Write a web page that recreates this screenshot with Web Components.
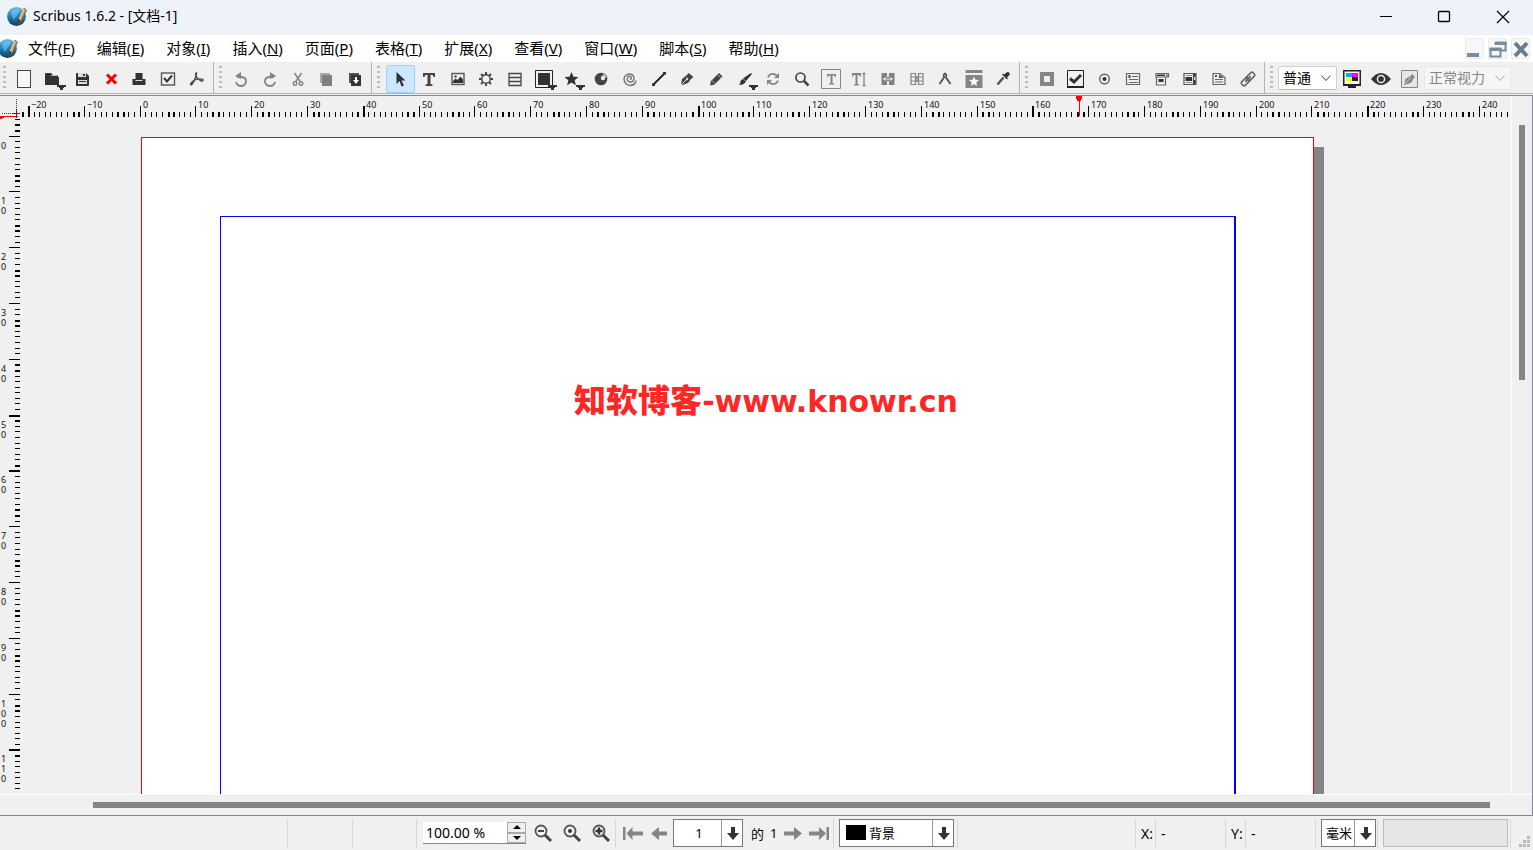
<!DOCTYPE html>
<html lang="zh-CN">
<head>
<meta charset="utf-8">
<title>Scribus 1.6.2 - [文档-1]</title>
<style>
html,body{height:100%;margin:0}
body{font-family:"Noto Sans","Noto Sans CJK SC",sans-serif;font-size:14px;color:#000;background:#f0f0f0;overflow:hidden}
</style>
</head>
<body>
<scribus-window></scribus-window>
<script>
const DOWN='<path d="M18 20h9v2h-2v1h-1v2h-3v-2h-1v-1h-2z" fill="#333"/>';
const ZOOM='<circle cx="12" cy="12" r="5.500" fill="none" stroke="#555" stroke-width="1.800"/><path d="M16 16l6 6" stroke="#444" stroke-width="3"/>';
const ICONS={
new:'<rect x="7.500" y="5.500" width="13" height="17" fill="#f7f7f7" stroke="#444"/>',
open:'<path d="M6 9q0-1 1-1h5l2 2h5v2h1v8H6z" fill="#333"/><path d="M12 10.500h6.500" stroke="#bbb"/>'+DOWN,
save:'<path d="M8 9q0-1 1-1h9l3 3v9q0 1-1 1H8z" fill="#333"/><path d="M10 8h8v4h-8zM10 15h9v4h-9z" fill="#ddd"/><path d="M15 9h2v2h-2zM11 16h7v1h-7z" fill="#333"/>',
close:'<path d="M10 9.500l9 9M19 9.500l-9 9" stroke="#f00" stroke-width="3"/>',
print:'<path d="M10.500 8h7v6h3v6h-13v-6h3z" fill="#333"/><path d="M10.500 15.500h7" stroke="#ddd"/>',
verify:'<rect x="7.500" y="8" width="13" height="12" fill="none" stroke="#555" stroke-width="1.400"/><path d="M10 13l3 3.500 5-6" fill="none" stroke="#333" stroke-width="2"/>',
pdf:'<path d="M13.500 8q-1.500 0-.5 3 1 3 5 5 2.500 0 2-1.500-3-1.500-8 .5-4 2-4.500 4.500 1 1 2.500-1.500 2-3 3.500-9z" fill="none" stroke="#444" stroke-width="1.300"/>',
undo:'<path d="M10 12h5q4.500 1 4 5-1 4-5 4-4 0-5-4" fill="none" stroke="#858585" stroke-width="1.800"/><path d="M14 7v7l-6-3z" fill="#858585"/>',
redo:'<path d="M18 12h-5q-4.500 1-4 5 1 4 5 4 4 0 5-4" fill="none" stroke="#858585" stroke-width="1.800"/><path d="M14 7v7l6-3z" fill="#858585"/>',
cut:'<path d="M10.500 8l6 9M17.500 8l-6 9" stroke="#858585" stroke-width="1.500"/><circle cx="11" cy="18.500" r="1.800" fill="none" stroke="#858585" stroke-width="1.400"/><circle cx="17" cy="18.500" r="1.800" fill="none" stroke="#858585" stroke-width="1.400"/>',
copy:'<path d="M8 8h10v2h-8v8H8z" fill="#aaa"/><path d="M10 10h10v11H10z" fill="#808080"/>',
paste:'<path d="M8 8h10v2h-8v8H8z" fill="#555"/><path d="M10 10h10v11H10z" fill="#333"/><path d="M14 12h2v3h2l-3 4-3-4h2z" fill="#fff"/>',
select:'<path d="M10.500 7v12l3-3 2 5.500 2.500-1-2.500-5h4z" fill="#333"/>',
text:'<path d="M8 8h12v4h-1.500l-.8-2H15.500v9l2 .5V21h-7v-1.500l2-.5v-9h-2.200l-.8 2H8z" fill="#444"/>',
image:'<rect x="8" y="8.500" width="12" height="11" fill="none" stroke="#555" stroke-width="1.400"/><path d="M9 18v-2l2.500-2.500 2 1.500 3-3.500 2.500 3v3.500z" fill="#333"/><circle cx="11.500" cy="11.500" r="1.300" fill="#555"/>',
render:'<circle cx="14" cy="14" r="4.200" fill="none" stroke="#444" stroke-width="1.400"/><g stroke="#444" stroke-width="2"><path d="M14 7v2.500M14 18.500V21M7 14h2.500M18.500 14H21M9 9l1.800 1.800M17.200 17.200L19 19M19 9l-1.800 1.800M10.800 17.200L9 19"/></g>',
table:'<path d="M8 8.500h12v12H8zM8 12.500h12M8 16.500h12" fill="none" stroke="#444" stroke-width="1.300"/>',
shape:'<path d="M5.500 5.500h17v17h-17z" fill="none" stroke="#222"/><path d="M8 8h12v12H8z" fill="#333"/>'+DOWN,
polygon:'<path d="M13.500 7l2 4.700 5 .3-3.800 3.300 1.200 5-4.400-2.700-4.400 2.700 1.200-5L6.500 12l5-.3z" fill="#333"/>'+DOWN,
arc:'<circle cx="14" cy="14" r="6.300" fill="#444"/><path d="M14 14l3-6.500 4 4.500z" fill="#aaa"/><circle cx="16" cy="13" r="2.200" fill="#eee"/>',
spiral:'<path d="M14 14.500q2-1 1-2.500-2-1.500-3.500.5-1 3.500 2 4.500 4 .5 4.500-3.500 0-4-4.500-4.500-5 .5-5.500 5 .5 5.500 6 6.500 5 0 6-5" fill="none" stroke="#777" stroke-width="1.500"/>',
line:'<path d="M8 20L20 8" stroke="#222" stroke-width="2"/><path d="M7 18.500h3v2.500H7zM18 7h3v2.500h-3z" fill="#333"/>',
bezier:'<path d="M8 20l1-6 5-4 1.500-2 5 4-2.500 2-3 4-5.500 2z" fill="#444"/><path d="M8 20l6-6" stroke="#ddd"/><circle cx="14" cy="14" r="1.200" fill="#ddd"/>',
pencil:'<path d="M8 20.500l1-4.500 8-8 3.500 3.500-8 8z" fill="#444"/><path d="M15.500 9.500l3.500 3.500M10 15.500l3 3" stroke="#aaa"/>',
brush:'<path d="M20 8l1 1-6 7-3-2.500z" fill="#333"/><path d="M12 14l3 2.500q-2 3.500-7.500 3.500 2-1 2-3.500 0-2 2.500-2.500z" fill="#333"/>'+DOWN,
rotate:'<path d="M9 12.500q1.500-4 5.500-3.500 2.500.5 3.500 2M19 15.500q-1.500 4-5.500 3.500-2.500-.5-3.500-2" fill="none" stroke="#858585" stroke-width="1.800"/><path d="M20 8v5h-5zM8 20v-5h5z" fill="#858585"/>',
zoom:'<circle cx="12.500" cy="12.500" r="4.500" fill="none" stroke="#444" stroke-width="1.700"/><path d="M16 16l4.500 4.500" stroke="#444" stroke-width="2.500"/>',
content:'<path d="M4.500 4.500h19v19h-19z" fill="none" stroke="#858585"/><path d="M10 9h9v3h-1l-.8-1.500H15.500V18l1.500.5v1h-5v-1l1.500-.5v-7.500h-1.700L11 12h-1z" fill="#858585"/>',
story:'<path d="M7 8h9v3.500h-1l-.8-1.500H12.500v9l1.500.5v1H9v-1l1.500-.5v-9H8.800L8 11.500H7z" fill="#858585"/><path d="M17.500 8.500h3M19 9v11M17.500 20.500h3" stroke="#858585" stroke-width="1.300"/>',
link:'<path d="M7.500 8H13v4h2V8h5.500v12H15v-4h-2v4H7.500z" fill="#808080"/><path d="M9.500 14H18M12 12.500L9.500 14l2.500 1.500M16 12.500l2.500 1.500-2.500 1.500" fill="none" stroke="#eee"/>',
unlink:'<path d="M8 8.500h4.500v11H8zM15.500 8.500H20v11h-4.500zM8 12h12M8 16h12M14 11v6" fill="none" stroke="#858585" stroke-width="1.200"/>',
measure:'<circle cx="14" cy="10.500" r="1.500" fill="none" stroke="#444" stroke-width="1.500"/><path d="M13 12.500l-4.500 6.500M15 12.500l4.500 6.500" stroke="#555" stroke-width="2"/><path d="M14 7.500v2" stroke="#444"/>',
copyprops:'<path d="M5.500 5h17v3h-17zM5.500 10h17v13h-17z" fill="#858585"/><path d="M14 11.500l1.300 3.300 3.700.2-2.800 2.500.9 3.500-3.100-1.900-3.100 1.900.9-3.500L9 15l3.700-.2z" fill="#fff"/>',
eyedrop:'<path d="M17 8q2-2 3.500 0 1 1.500-1 3l-1.500 1.500 1 1-1 1-5-5 1-1 1 1z" fill="#333"/><path d="M14.500 12.500l-6 7" stroke="#555" stroke-width="2.500"/>',
pushbtn:'<path d="M8.500 8.500h11v11h-11z" fill="none" stroke="#858585" stroke-width="3"/><path d="M10.500 10.500h7v7h-7z" fill="none" stroke="#666" stroke-width=".8"/>',
checkbox:'<path d="M5.500 5.500h16v17h-16z" fill="none" stroke="#222"/><path d="M5 22h17" stroke="#222" stroke-width="2"/><path d="M8 13.500l4 3.500 7-7" fill="none" stroke="#333" stroke-width="3"/>',
radio:'<circle cx="13.500" cy="14" r="4.800" fill="none" stroke="#666" stroke-width="1.400"/><circle cx="13.500" cy="14" r="2" fill="#333"/>',
field:'<path d="M7.500 8.500h13v11h-13zM13 11.500h6M10 14.500h9M10 17.500h9" fill="none" stroke="#666" stroke-width="1.200"/><path d="M9.500 10h2v3h-2z" fill="#444"/>',
combo:'<path d="M8 8.500h12.500V12H8zM8.500 12v8h9v-8" fill="none" stroke="#666" stroke-width="1.200"/><path d="M9 9.500h8V11H9zM10.500 14h5v3h-5z" fill="#333"/><path d="M18 9.500h2v2h-2z" fill="#777"/>',
list:'<path d="M8 8.500h12v11H8zM17.500 9v10" fill="none" stroke="#555" stroke-width="1.200"/><path d="M9.500 12h6.500v4H9.500zM17.500 9h2v3h-2zM17.500 15h2v4h-2z" fill="#333"/><path d="M10 10.500h6M10 17.500h6" stroke="#888"/>',
note:'<path d="M8 8.500h7l5 4v7H8z" fill="none" stroke="#666" stroke-width="1.200"/><path d="M10 14.500h8M10 17h8" stroke="#666"/><path d="M10 10h2v2h-2zM14 9l5 4h-5z" fill="#555"/>',
hyper:'<g transform="rotate(-45 14 14)" fill="none" stroke="#666" stroke-width="1.600"><rect x="6" y="11.500" width="9" height="5" rx="1.500"/><rect x="13" y="11.500" width="9" height="5" rx="1.500"/><path d="M10 14h8"/></g>',
display:'<path d="M5 5h18v16H5z" fill="#222"/><path d="M6.500 6.500h15v12.500h-15z" fill="#f4f4f4"/><path d="M8 8h6v4H8z" fill="#0af"/><path d="M14 8h6v4h-6z" fill="#f0f"/><path d="M8 12h6v4H8z" fill="#ff0"/><path d="M14 12h6v4h-6zM10 20h8v3h-8z" fill="#222"/>',
eye:'<path d="M4 14q10-12 20 0-10 12-20 0z" fill="#333"/><circle cx="14" cy="14" r="3.600" fill="none" stroke="#eee" stroke-width="1.500"/>',
editprev:'<path d="M5.500 5.500h16v17h-16z" fill="#e6e6e6" stroke="#858585"/><path d="M8 20l1.500-6 5-3 1.500-2 3 3-2 2-1 3-4 2z" fill="#858585"/><path d="M9 19l6-7" stroke="#ccc"/>',
zoomout:ZOOM+'<path d="M9 12h6" stroke="#444" stroke-width="2"/>',
zoom100:ZOOM+'<circle cx="12" cy="12" r="2" fill="#333"/>',
zoomin:ZOOM+'<path d="M8.500 12h7M12 8.500v7" stroke="#333" stroke-width="2.400"/>',
first:'<path d="M5 8h2.500v13H5zM8.500 14.500l6-6.500v4.500H25v4h-10.500v4.500z" fill="#858585"/>',
prev:'<path d="M6 14.500l8-6.500v4.500h8v4h-8v4.500z" fill="#858585"/>',
next:'<path d="M23 14.500l-8-6.500v4.500H5v4h10v4.500z" fill="#858585"/>',
last:'<path d="M20.500 8H23v13h-2.500zM20 14.500l-7-6.500v4.500H3v4h10v4.500z" fill="#858585"/>',
arrowdown:'<path d="M12 7h4v6h4l-6 7-6-7h4z" fill="#333"/>',
chevron:'<path d="M9.500 11.500l4.500 5 4.500-5" fill="none" stroke="currentColor"/>',
logo:'<defs><linearGradient id="b" x1="0" y1="0" x2="0" y2="1"><stop offset="0" stop-color="#66bdf0"/><stop offset=".5" stop-color="#1d80b9"/><stop offset="1" stop-color="#123c5c"/></linearGradient></defs><circle cx="13.500" cy="13.500" r="9.400" fill="url(#b)"/><path d="M8 8q5-3 9-1l-6 10q-3-4-3-9z" fill="#91d0f2" opacity=".5"/><path d="M21 5l2.500 2-4.500 10-4 4.500 1-6.500z" fill="#c0935a" stroke="#5a4228" stroke-width=".6"/><path d="M21 6l-4.500 10" stroke="#f2d493" stroke-width="1.500"/><path d="M16 16l-1.500 5 3-3z" fill="#402b18"/>',
winmin:'<path d="M7 14.500h12" stroke="#000"/>',
winmax:'<rect x="7.500" y="9.500" width="11" height="10" rx="1" fill="none" stroke="#000" stroke-width="1.300"/>',
winclose:'<path d="M8 9l12 12M20 9L8 21" stroke="#000" stroke-width="1.200"/>',
mdimin:'<path d="M6 18h12v4H6z" fill="#758ba0"/>',
mdimax:'<path d="M11.500 7.500h10v8h-4M6.500 13.500h10v8h-10z" fill="none" stroke="#758ba0" stroke-width="2"/><path d="M10.500 7h12v3h-12zM5.500 13h12v3h-12z" fill="#758ba0"/>',
mdiclose:'<path d="M8 8l12 13M20 8L8 21" stroke="#667d91" stroke-width="4"/>'
};
function define(name,css,html,setup){
  customElements.define(name,class extends HTMLElement{
    constructor(){super();this.attachShadow({mode:'open'})}
    connectedCallback(){
      this.shadowRoot.innerHTML='<style>*{box-sizing:border-box}'+css+'</style>'+(typeof html==='function'?html(this):html);
      if(setup)setup(this);
    }
  });
}
define('s-icon',':host{display:block;width:28px;height:28px;flex:none}svg{display:block;overflow:visible;flex:none}',
  el=>`<svg width="28" height="28" viewBox="0 0 28 28" aria-hidden="true">${ICONS[el.getAttribute('name')]}</svg>`);

define('tool-button',`:host{display:block;flex:1;min-width:0}
button{width:100%;height:28px;padding:0;border:1px solid transparent;border-radius:2px;background:none;display:grid;place-content:center;overflow:visible}
:host([active]) button{background:#cce8ff;border-color:#99d1ff}`,
  el=>`<button aria-label="${el.getAttribute('label')}"><s-icon name="${el.getAttribute('icon')}"></s-icon></button>`);

define('tool-bar',`:host{display:flex;flex:none;height:32px;padding:3px 2px 0 0;border-right:1px solid #b4b4b4;border-bottom:1px solid #b4b4b4}
i{flex:none;width:3px;height:24px;margin:1px 5px 0 5px;background:repeating-linear-gradient(#bbb 0 2px,transparent 2px 5px)}
:host([lead]) i{margin:1px 4px 0 3px}:host([wide]) i{margin-right:6px}:host([last]){flex:1;border-right:0}`,'<i></i><slot></slot>');

define('combo-box',`:host{display:grid;grid-template-rows:24px;flex:none;height:24px;font-size:14px}
select,s-icon{grid-area:1/1}
select{appearance:none;width:100%;height:100%;margin:0;padding:0 20px 2px 4px;border:1px solid #d0d0d0;border-bottom-color:#bbb;border-radius:2px;background:#fff;color:#000;opacity:1;font:inherit}
select:disabled{color:#858585;background:#f6f6f6;border-color:#e8e8e8}
s-icon{justify-self:end;align-self:center;pointer-events:none;margin-right:-3px;color:#444}
:host([disabled]) s-icon{color:#aaa}
:host([classic]){height:28px;grid-template-rows:28px}
:host([classic]) select{border:1px solid #777;border-radius:0;padding:0 22px 0 4px}
:host([classic]) s-icon{margin:0;width:22px;border-left:1px solid #999;height:26px;display:flex;justify-content:center}
:host([centered]) select{text-align-last:center}
:host([swatch]) select{padding-left:29px}
b{display:none}:host([swatch]) b{display:block;grid-area:1/1;width:20px;height:15px;background:#000;margin:6px 0 0 7px;z-index:1}`,
  el=>`<select aria-label="${el.getAttribute('label')}" ${el.hasAttribute('disabled')?'disabled':''}><option>${el.getAttribute('value')}</option></select><b></b><s-icon name="${el.hasAttribute('classic')?'arrowdown':'chevron'}"></s-icon>`);

define('title-bar',`:host{display:flex;flex:none;height:35px;align-items:center;background:#eff3f9;padding:0 1px 0 3px}
h1{flex:1;font-size:14px;font-weight:400;line-height:20px;margin:0 0 0 2px;padding-bottom:3px}
s-icon{margin-bottom:2px}button{width:58px;height:35px;border:0;background:none;padding:0 0 3px;display:grid;place-content:center}button s-icon{margin:0}`,
`<s-icon name="logo"></s-icon><h1>Scribus 1.6.2 - [文档-1]</h1>
<button aria-label="最小化"><s-icon name="winmin"></s-icon></button><button aria-label="最大化"><s-icon name="winmax"></s-icon></button><button aria-label="关闭"><s-icon name="winclose"></s-icon></button>`);

define('menu-item',`:host{display:block}button{border:0;background:none;padding:0 11px 2px;height:27px;font:inherit;color:#000;white-space:nowrap}`,
  el=>`<button><slot></slot>(<u>${el.getAttribute('key')}</u>)</button>`);
define('menu-bar',`:host{display:flex;flex:none;height:27px;align-items:center;background:#fff}
nav{display:flex;flex:1;font-size:15px}.logo{margin:0 -5px 0 -6px}
.mdi{width:19px;height:21px;padding:0;margin-right:4px;border:1px solid #eaeaea;border-radius:2px;background:#f7f7f7;display:grid;place-content:center}
.mdi:last-child{margin-right:3px}`,
`<s-icon class="logo" name="logo"></s-icon><nav>
<menu-item key="F">文件</menu-item><menu-item key="E">编辑</menu-item><menu-item key="I">对象</menu-item><menu-item key="N">插入</menu-item><menu-item key="P">页面</menu-item><menu-item key="T">表格</menu-item><menu-item key="X">扩展</menu-item><menu-item key="V">查看</menu-item><menu-item key="W">窗口</menu-item><menu-item key="S">脚本</menu-item><menu-item key="H">帮助</menu-item></nav>
<button class="mdi" aria-label="最小化文档"><s-icon name="mdimin"></s-icon></button><button class="mdi" aria-label="还原文档"><s-icon name="mdimax"></s-icon></button><button class="mdi" aria-label="关闭文档"><s-icon name="mdiclose"></s-icon></button>`);

const tools=s=>s.split(' ').map(t=>{const [n,l]=t.split(':');return `<tool-button icon="${n}" label="${l}"${n==='select'?' active':''}></tool-button>`}).join('');
define('tool-area',`:host{display:flex;flex:none;height:33px;background:#f0f0f0}
.a{width:214px}.b{width:158px}.c{width:648px}.d{width:245px}
.e{min-width:0}.e tool-button{flex:none;width:29px}.e combo-box{margin-top:1px}.mode{width:59px}.vision{width:87px}`,
`<tool-bar lead class="a">${tools('new:新建 open:打开 save:保存 close:关闭 print:打印 verify:预检 pdf:导出PDF')}</tool-bar>
<tool-bar class="b">${tools('undo:撤销 redo:重做 cut:剪切 copy:复制 paste:粘贴')}</tool-bar>
<tool-bar wide class="c">${tools('select:选择 text:文本框 image:图像框 render:渲染框 table:表格 shape:形状 polygon:多边形 arc:圆弧 spiral:螺旋 line:直线 bezier:贝塞尔 pencil:手绘线 brush:书法线 rotate:旋转 zoom:缩放 content:编辑内容 story:编辑文本 link:链接文本框 unlink:断开文本框 measure:测量 copyprops:复制属性 eyedrop:吸管')}</tool-bar>
<tool-bar class="d">${tools('pushbtn:按钮 checkbox:复选框 radio:单选 field:文本字段 combo:组合框 list:列表框 note:注释 hyper:链接')}</tool-bar>
<tool-bar last class="e"><combo-box class="mode" label="预览质量" value="普通"></combo-box>${tools('display:色彩管理 eye:预览模式 editprev:预览编辑')}<combo-box class="vision" disabled label="视觉" value="正常视力"></combo-box></tool-bar>`);

/* Millimetre rulers: short tick each mm, long tick and label each 10 mm. */
const MM=5.58;
function heavySet(start,step){const s=new Set();for(let k=0;k<60;k++){const n=Math.round(start+step*k);s.add(n);s.add(n+1)}return s}
const HEAVY_H=heavySet(-21.05,8.6),HEAVY_V=heavySet(-1.7,8.63);
const RULER_CSS=':host{display:block;min-width:0;min-height:0;overflow:hidden}svg{display:block}text{font:9px "Noto Sans",sans-serif;fill:#111}';
function live(el,draw){const box=el.shadowRoot.querySelector('div');const go=()=>{box.innerHTML=draw(el.clientWidth,el.clientHeight)};go();new ResizeObserver(go).observe(el)}
define('ruler-h',RULER_CSS,'<div></div>',el=>live(el,width=>{
  let d='',t='';
  for(let n=-21;;n++){const x=Math.round(119.6+MM*n),w=HEAVY_H.has(n)?2:1,y=n%10?16:10;
    if(x>width-3)break;
    d+=`M${x} ${y}h${w}V21h-${w}z`;
    if(n%10===0&&x+20<width)t+=`<text x="${x+3}" y="12">${String(n).replace('-','−')}</text>`}
  return `<svg width="${width}" height="22"><path d="${d}" shape-rendering="crispEdges"/>${t}<path d="M1056 0h6v3h-1v2h-1v15h-1V5h-2V3h-1z" fill="#f00"/></svg>`;
}));
define('ruler-v',RULER_CSS+':host{position:relative}div{position:absolute;inset:0}','<div></div>',el=>live(el,(width,height)=>{
  let d='',t='';
  for(let n=-3;;n++){const y=Math.round(17.6+MM*n),h=HEAVY_V.has(n)?2:1,x=n%10?15:9;
    if(y>height-2)break;
    d+=`M${x} ${y}H20v${h}H${x}z`;
    if(n%10===0&&y+36<height)[...String(n)].forEach((c,i)=>t+=`<text x="1" y="${y+13+i*10}">${c}</text>`)}
  return `<svg width="20" height="${height}"><path d="${d}" shape-rendering="crispEdges"/>${t}</svg>`;
}));
define('ruler-corner',':host{display:block}svg{display:block;overflow:visible}',
`<svg width="20" height="22"><path d="M16.500 3v18M2 17.500h18" stroke="#333" stroke-dasharray="1 1"/><path d="M12 17.500h8M16.500 13v9" stroke="#333"/><path d="M0 20h18v1H4v1H2v1H0z" fill="#f00"/></svg>`);

define('document-canvas',`:host{display:block;min-width:0;overflow:hidden;background:#f0f0f0}
.page{height:100%;margin:19px 197px 0 121px;border:1px solid #f00;background:#fff;box-shadow:10px 10px 0 #858585;padding:78px 77px 0 78px}
.frame{height:100%;border:solid #00f;border-width:1px 2px 0 1px}`,
`<div class="page"><div class="frame"></div></div>`);

define('water-mark',`:host{display:block;position:absolute;left:0;right:0;top:284px;text-align:center;color:#ff2626;font-size:32px;line-height:40px;font-weight:900;white-space:nowrap;pointer-events:none}
span{font:700 30px/40px "DejaVu Sans",sans-serif}`,'知软博客<span>-www.knowr.cn</span>');

define('work-space',`:host{position:relative;display:grid;flex:1;min-height:0;grid-template:22px 1fr 21px/20px 1fr 21px;border:1px solid #848694;border-left:0;background:#f0f0f0}
document-canvas{grid-area:2/2}ruler-corner{grid-area:1/1}ruler-h{grid-area:1/2}ruler-v{grid-area:2/1}
.v{grid-area:1/3/3/4;border-left:1px solid #fff;padding:29px 7px 0 7px}.v div{height:37%;min-height:255px;background:#858585}
.h{grid-area:3/1/4/4;border-top:1px solid #fff;padding:7px 42px 0 93px}.h div{height:6px;background:#858585}`,
`<ruler-corner></ruler-corner><ruler-h></ruler-h><ruler-v></ruler-v><document-canvas></document-canvas>
<div class="v"><div></div></div><div class="h"><div></div></div><water-mark></water-mark>`);

define('zoom-box',`:host{display:flex;width:103px;height:22px;background:#fff;border-bottom:1px solid #858585}
input{flex:1;min-width:0;border:0;padding:0 3px;background:none;font:inherit;color:#000}
div{width:19px;display:grid;grid-template-rows:1fr 1fr}button{border:1px solid #aaa;background:#f0f0f0;padding:0;display:grid;place-content:center}svg{display:block}`,
`<input aria-label="缩放" value="100.00 %"><div><button aria-label="增大"><svg width="8" height="4"><path d="M0 4l4-4 4 4z"/></svg></button><button aria-label="减小"><svg width="8" height="4"><path d="M0 0h8L4 4z"/></svg></button></div>`);

define('status-bar',`:host{display:flex;flex:none;height:34px;align-items:center;background:#f0f0f0;font-size:14px}
hr{flex:none;width:1px;height:29px;margin:0;border:0;background:#d8d8d8}
.s1{width:287px}.s2{width:64px}.s3{width:63px}.s4{flex:1}
zoom-box{margin:0 3px 0 6px}.z,.n{display:flex}.z{width:86px}.n{width:53px}
hr+.n{margin-left:3px}
.pg{width:70px;margin-left:1px}.of{padding:0 2px 0 8px;display:flex;gap:6px;width:37px;white-space:nowrap;font-size:13px}.layer{width:115px;margin:0 3px 0 5px}
.lb{width:19px;padding-left:5px}.val{width:69px;padding-left:5px}.unit{width:55px;margin:0 1px 0 5px}.layer,.unit,.pg{font-size:13px}
progress{appearance:none;display:block;width:125px;height:28px;margin:0 2px 0 5px;border:1px solid #bcbcbc;background:#e6e6e6}
progress::-webkit-progress-bar{background:#e6e6e6}
.grip{align-self:flex-end;margin-left:6px;display:block}`,
`<span class="s1"></span><hr><span class="s2"></span><hr><span class="s3"></span><hr>
<zoom-box></zoom-box><div class="z">${tools('zoomout:缩小 zoom100:原始大小 zoomin:放大')}</div><hr>
<div class="n">${tools('first:首页 prev:上一页')}</div><combo-box classic centered class="pg" label="页码" value="1"></combo-box>
<span class="of"><span>的</span><span>1</span></span><div class="n">${tools('next:下一页 last:末页')}</div><hr>
<combo-box classic swatch class="layer" label="图层" value="背景"></combo-box><hr><span class="s4"></span>
<hr><span class="lb">X:</span><hr><span class="val">-</span><hr><span class="lb">Y:</span><hr><span class="val">-</span><hr>
<combo-box classic class="unit" label="单位" value="毫米"></combo-box><hr><progress aria-label="进度" value="0" max="100"></progress><hr>
<svg class="grip" width="16" height="16"><path d="M10 2h3v3h-3zM6 6h3v3H6zM10 6h3v3h-3zM2 10h3v3H2zM6 10h3v3H6zM10 10h3v3h-3z" fill="#bbb"/></svg>`);

define('scribus-window',':host{display:flex;flex-direction:column;height:100vh}',
'<title-bar></title-bar><menu-bar></menu-bar><tool-area></tool-area><work-space></work-space><status-bar></status-bar>');
</script>
</body>
</html>
